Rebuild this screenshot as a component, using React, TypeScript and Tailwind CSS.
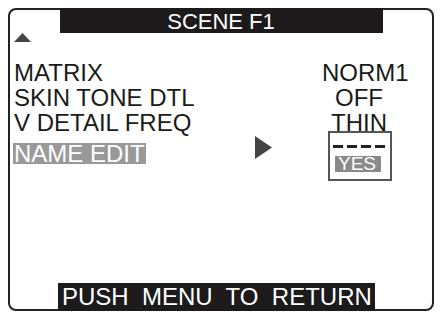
import React from 'react';

const font = { fontFamily: '"Liberation Sans", Arial, sans-serif' };

const rows = [
  { label: 'MATRIX', value: 'NORM1', pad: 'pl-0' },
  { label: 'SKIN TONE DTL', value: 'OFF', pad: 'pl-[13px]' },
  { label: 'V DETAIL FREQ', value: 'THIN', pad: 'pl-[9px]' },
];

export default function App() {
  return (
    <div
      className="w-[440px] h-[312px] bg-white pt-2 pl-2 pr-[6px] text-[#1a1a1a]"
      style={font}
    >
      <div className="h-[303px] border-2 border-[#222] rounded-[8px] flex flex-col">
        {/* title */}
        <div className="self-center -mt-[2px] w-[323px] h-[25px] bg-[#1c1a1a] text-white text-[22px] leading-[24px] pt-[2px] text-center">
          SCENE F1
        </div>

        {/* scroll-up marker */}
        <svg width="17" height="9" viewBox="0 0 17 9" className="ml-[4px]">
          <polygon points="8.5,0 17,9 0,9" fill="#444" />
        </svg>

        {/* menu */}
        <div className="mt-[19px] flex flex-col text-[24px]">
          {rows.map((r) => (
            <div key={r.label} className="flex h-[25px] leading-[24px]">
              <div className="w-[312px] pl-[4px] whitespace-nowrap">{r.label}</div>
              <div className={`whitespace-nowrap ${r.pad}`}>{r.value}</div>
            </div>
          ))}
          <div className="flex items-start h-[25px]">
            <div className="w-[245px] pl-[3px]">
              <span className="inline-block bg-[#999] text-white px-[1px] leading-[21px] whitespace-nowrap">
                NAME EDIT
              </span>
            </div>
            <svg width="17" height="23" viewBox="0 0 17 23">
              <polygon points="0,0 17,11.5 0,23" fill="#444" />
            </svg>
            <div className="ml-[56px] -mt-[5px] w-[64px] h-[50px] border-2 border-[#555] bg-white flex flex-col">
              <div className="mt-[12px] pl-[3px] flex gap-[4px]">
                <div className="w-[10px] h-[3px] bg-[#222]" />
                <div className="w-[10px] h-[3px] bg-[#222]" />
                <div className="w-[10px] h-[3px] bg-[#222]" />
                <div className="w-[10px] h-[3px] bg-[#222]" />
              </div>
              <div className="mt-[8px] ml-[5px] w-[46px] h-[16px] bg-[#8a8a8a] text-white text-[19px] leading-[16px] pl-[3px]">
                YES
              </div>
            </div>
          </div>
        </div>

        {/* footer */}
        <div className="mt-auto -mb-[2px] ml-[48px] w-[317px] h-[28px] bg-[#1c1a1a] text-white text-[24px] leading-[28px] pl-[4px] whitespace-pre">
          {'PUSH  MENU  TO  RETURN'}
        </div>
      </div>
    </div>
  );
}
